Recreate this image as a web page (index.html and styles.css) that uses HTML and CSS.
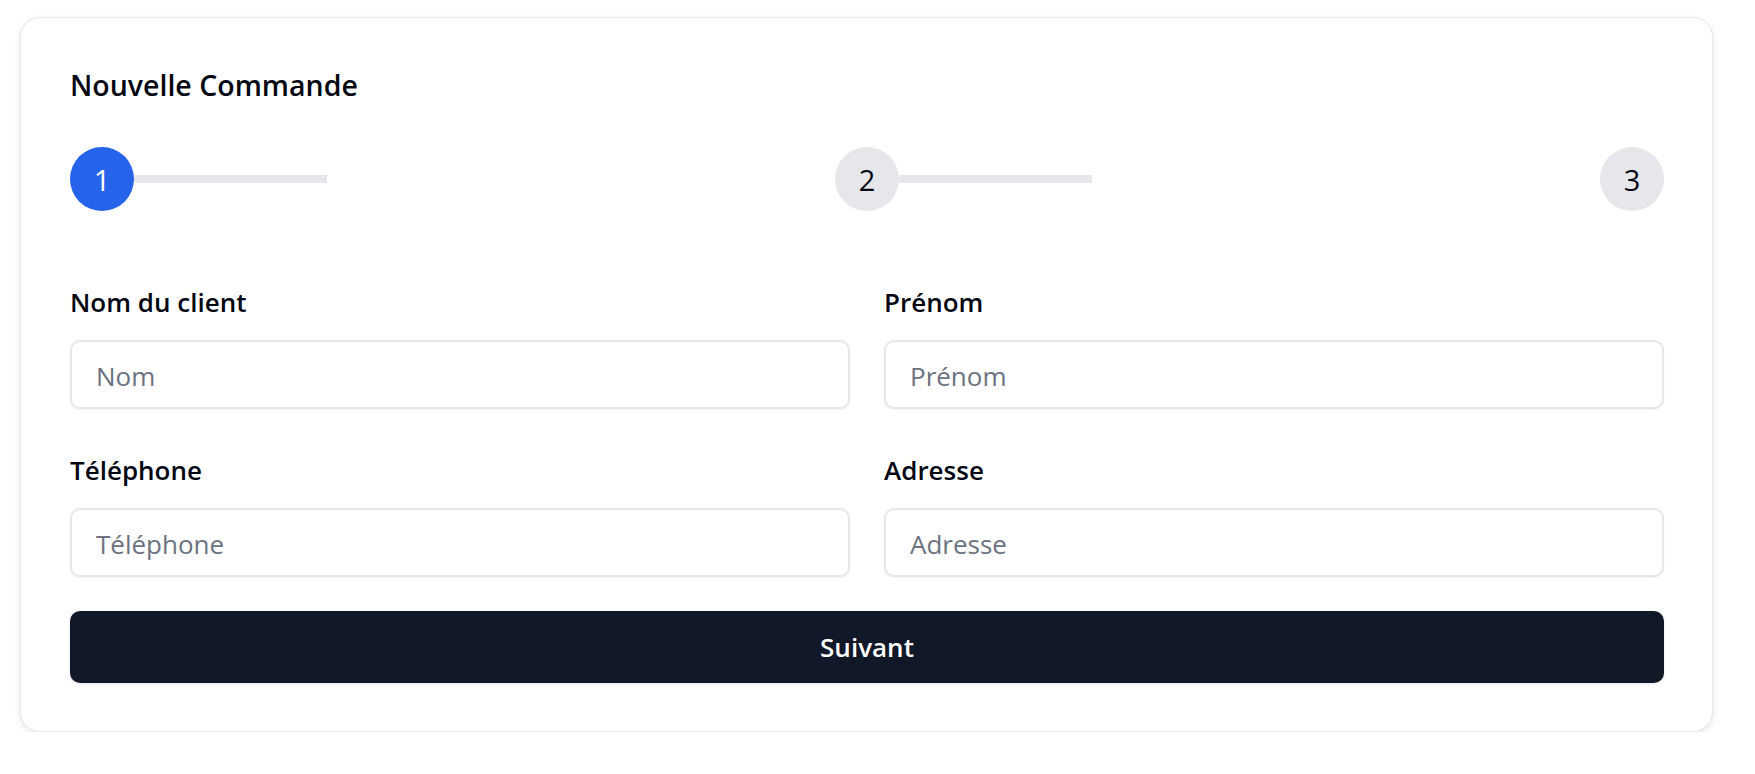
FILE: index.html
```html
<!DOCTYPE html>
<html lang="fr">
<head>
<meta charset="utf-8">
<title>Nouvelle Commande</title>
<link rel="stylesheet" href="styles.css">
</head>
<body>
<main class="card">
  <h1 class="title">Nouvelle Commande</h1>
  <div class="stepper">
    <div class="step">
      <div class="dot dot-active">1</div>
      <div class="bar"></div>
    </div>
    <div class="step">
      <div class="dot">2</div>
      <div class="bar"></div>
    </div>
    <div class="step">
      <div class="dot">3</div>
    </div>
  </div>
  <form class="form">
    <div class="grid">
      <div class="field">
        <label class="label" for="nom">Nom du client</label>
        <input class="input" id="nom" type="text" placeholder="Nom">
      </div>
      <div class="field">
        <label class="label" for="prenom">Prénom</label>
        <input class="input" id="prenom" type="text" placeholder="Prénom">
      </div>
      <div class="field">
        <label class="label" for="tel">Téléphone</label>
        <input class="input" id="tel" type="text" placeholder="Téléphone">
      </div>
      <div class="field">
        <label class="label" for="adresse">Adresse</label>
        <input class="input" id="adresse" type="text" placeholder="Adresse">
      </div>
    </div>
    <button class="btn" type="button">Suivant</button>
  </form>
</main>
</body>
</html>
```

FILE: styles.css
```css
* { box-sizing: border-box; }

html, body {
  margin: 0;
  padding: 0;
  background: #ffffff;
}

body {
  font-family: "Open Sans", "Noto Sans", "Liberation Sans", sans-serif;
  color: #030712;
  padding: 17px 0 0 20px;
}

.card {
  width: 1693px;
  background: #ffffff;
  border: 1px solid #e5e7eb;
  border-radius: 20px;
  box-shadow: 0 2px 6px rgba(0, 0, 0, 0.1);
  padding: 47px 48px 48px 49px;
}

.title {
  margin: 0;
  font-size: 28.5px;
  line-height: 40px;
  font-weight: 600;
  color: #030712;
}

.stepper {
  margin-top: 42px;
  display: flex;
  justify-content: space-between;
  align-items: center;
}

.step {
  display: flex;
  align-items: center;
}

.dot {
  width: 64px;
  height: 64px;
  border-radius: 50%;
  background: #e5e7eb;
  color: #030712;
  display: flex;
  align-items: center;
  justify-content: center;
  font-size: 29px;
  line-height: 1;
}

.dot-active {
  background: #2563eb;
  color: #ffffff;
}

.bar {
  width: 193px;
  height: 8px;
  background: #e5e7eb;
}

.form {
  margin-top: 73px;
}

.grid {
  display: grid;
  grid-template-columns: 1fr 1fr;
  column-gap: 34px;
  row-gap: 43px;
}

.field {
  display: flex;
  flex-direction: column;
  gap: 20px;
}

.label {
  font-size: 26px;
  line-height: 36px;
  font-weight: 600;
  color: #030712;
}

.input {
  height: 69px;
  width: 100%;
  border: 2px solid #e5e7eb;
  border-radius: 10px;
  padding: 3px 24px 0;
  font-family: inherit;
  font-size: 26px;
  color: #111827;
  background: #ffffff;
  box-shadow: 0 1px 2px rgba(0, 0, 0, 0.05);
  outline: none;
}

.input::placeholder {
  color: #6b7280;
}

.btn {
  margin-top: 34px;
  width: 100%;
  height: 72px;
  border: none;
  border-radius: 10px;
  background: #111827;
  color: #ffffff;
  font-family: inherit;
  font-size: 26px;
  font-weight: 600;
  box-shadow: 0 1px 3px rgba(0, 0, 0, 0.1);
  cursor: pointer;
}
```
